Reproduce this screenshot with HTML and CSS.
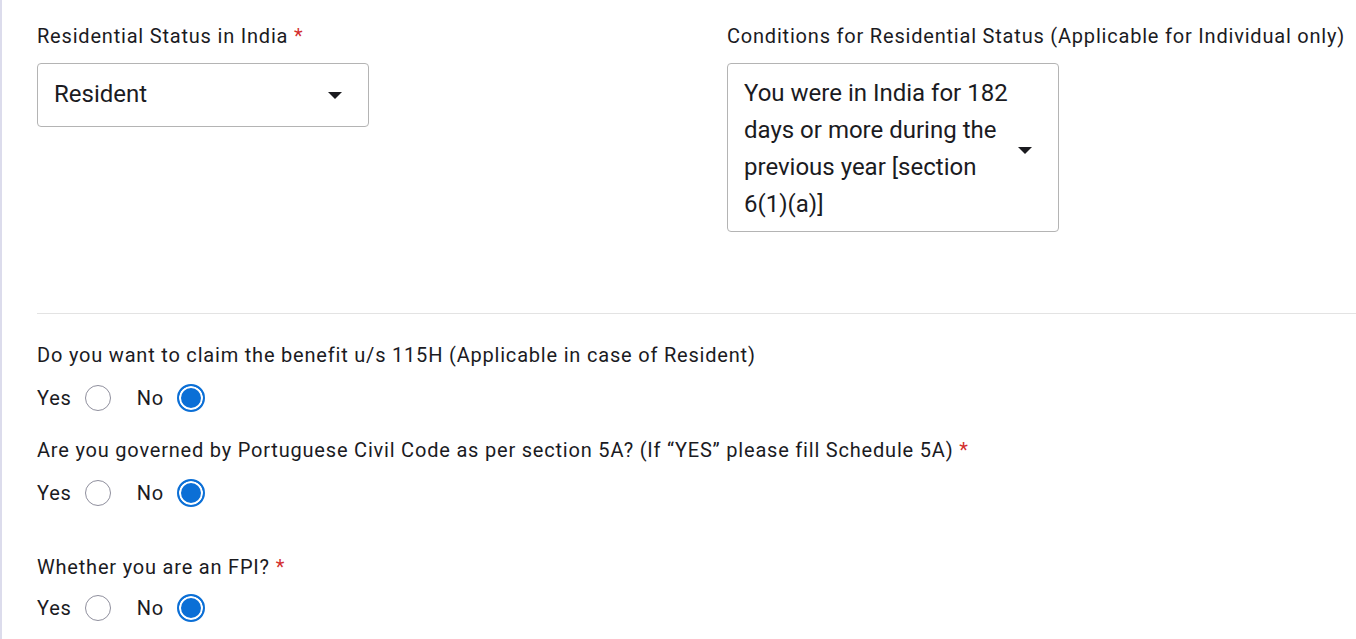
FILE: index.html
```html
<!DOCTYPE html>
<html>
  <head>
    <title>Residential Status</title>
    <link rel="stylesheet" href="styles.css">
  </head>
  <body>
    <div class="page">
      <div class="row">
        <div class="field">
          <label class="label">Residential Status in India <span class="req">*</span></label>
          <div class="select select-short">
            <span class="value">Resident</span>
            <span class="caret"></span>
          </div>
        </div>
        <div class="field">
          <label class="label">Conditions for Residential Status (Applicable for Individual only)</label>
          <div class="select select-tall">
            <span class="value">You were in India for 182 days or more during the previous year [section 6(1)(a)]</span>
            <span class="caret"></span>
          </div>
        </div>
      </div>

      <hr class="divider">

      <div class="question">
        <p class="label">Do you want to claim the benefit u/s 115H (Applicable in case of Resident)</p>
        <div class="radios">
          <label class="opt">Yes <span class="radio"></span></label>
          <label class="opt">No <span class="radio checked"></span></label>
        </div>
      </div>

      <div class="question">
        <p class="label">Are you governed by Portuguese Civil Code as per section 5A? (If &ldquo;YES&rdquo; please fill Schedule 5A) <span class="req">*</span></p>
        <div class="radios">
          <label class="opt">Yes <span class="radio"></span></label>
          <label class="opt">No <span class="radio checked"></span></label>
        </div>
      </div>

      <div class="question spaced">
        <p class="label">Whether you are an FPI? <span class="req">*</span></p>
        <div class="radios">
          <label class="opt">Yes <span class="radio"></span></label>
          <label class="opt">No <span class="radio checked"></span></label>
        </div>
      </div>
    </div>
  </body>
</html>
```

FILE: styles.css
```css
html, body {
  margin: 0;
  height: 100%;
}
body {
  background-color: #fff;
  font-family: Roboto, 'Noto Sans', sans-serif;
  color: #1b1b1f;
  border-left: 2px solid #dcdcec;
  overflow: hidden;
}

.page {
  padding: 24px 0 0 35px;
}

.row {
  display: grid;
  grid-template-columns: 690px 1fr;
}

.label {
  margin: 0;
  font-size: 20px;
  line-height: 24px;
  letter-spacing: 0.8px;
  white-space: nowrap;
}

.req {
  color: #d32f2f;
  letter-spacing: 0;
}

.select {
  margin-top: 15px;
  border: 1px solid #b4b4b4;
  border-radius: 4px;
  display: flex;
  align-items: center;
  box-sizing: border-box;
  width: 332px;
  padding: 0 26px 0 16px;
  font-size: 24px;
}

.select-short {
  height: 64px;
}

.select-short .value {
  margin-top: -2px;
}

.select-tall {
  height: 169px;
  padding-top: 3px;
}

.select-tall .value {
  line-height: 37px;
  width: 270px;
}

.select-tall .caret {
  margin-top: 3px;
}

.value {
  flex: 1;
}

.caret {
  width: 0;
  height: 0;
  border-left: 7px solid transparent;
  border-right: 7px solid transparent;
  border-top: 7px solid #1b1b1f;
}

.divider {
  margin: 81px 0 0 0;
  border: none;
  border-top: 1px solid #e3e3e3;
}

.question {
  margin-top: 29px;
}

.question + .question {
  margin-top: 26px;
}

.question.spaced {
  margin-top: 48px;
}

.radios {
  display: flex;
  gap: 26px;
  margin-top: 17px;
}

.spaced .radios {
  margin-top: 15px;
}

.opt {
  display: flex;
  align-items: center;
  gap: 13px;
  font-size: 20px;
  letter-spacing: 0.8px;
}

.radio {
  width: 26px;
  height: 26px;
  border: 1px solid #8f8f9d;
  border-radius: 50%;
  box-sizing: border-box;
  background: #fff;
}

.radio.checked {
  width: 28px;
  height: 28px;
  border: 2px solid #0b6fd6;
  box-shadow: inset 0 0 0 2px #fff;
  background: #0b6fd6;
}
```
